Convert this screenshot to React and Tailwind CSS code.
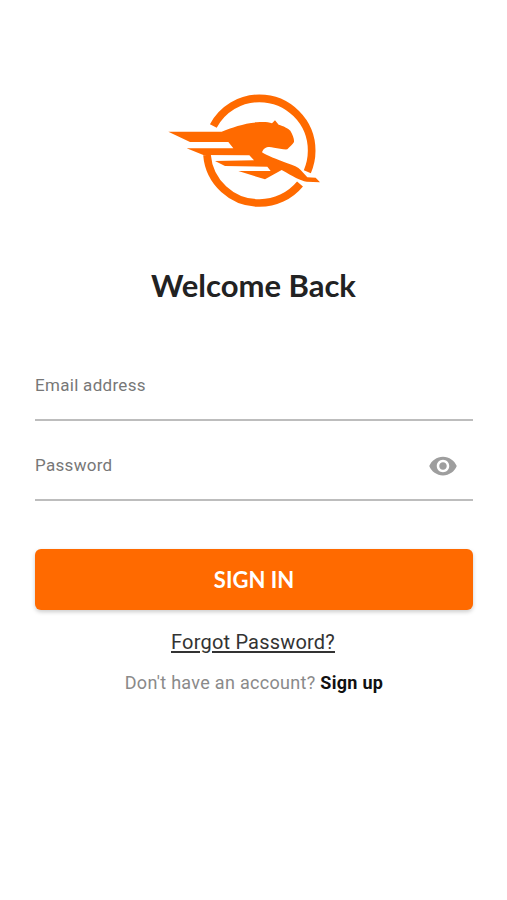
import React from 'react';

function Logo() {
    return (
        <svg width="190" height="140" viewBox="0 0 570 420" className="ml-[150px] block">
            <g fill="none" stroke="#ff6a00" strokeWidth="23">
                <path d="M190 138 A157 157 0 0 1 328 55 A157 157 0 0 1 485 212 A157 157 0 0 1 472 275" />
                <path d="M450 312 A157 157 0 0 1 328 369 A157 157 0 0 1 171 225" />
            </g>
            <path
                fill="#ff6a00"
                d="M55 155 L215 155 C245 143 280 130 320 127 C340 125 355 126 366 130 L375 121 L386 134 C400 138 415 145 421 152 C428 165 433 175 432 186 C428 194 420 198 412 208 C400 209 385 204 372 203 C355 199 342 200 336 217 C350 226 380 238 412 250 C430 256 445 262 452 270 L472 292 L497 293 L510 307 L470 305 C450 302 430 290 395 270 L345 298 L265 273 L362 273 L352 260 L225 258 L195 243 L312 241 L298 226 L160 225 L110 205 L250 205 L235 186 L120 186 Z"
            />
        </svg>
    );
}

function EyeIcon() {
    return (
        <svg width="30" height="30" viewBox="0 0 24 24" fill="#9e9e9e">
            <path d="M12 4.5C7 4.5 2.73 7.61 1 12c1.73 4.39 6 7.5 11 7.5s9.27-3.11 11-7.5c-1.73-4.39-6-7.5-11-7.5zM12 17c-2.76 0-5-2.24-5-5s2.24-5 5-5 5 2.24 5 5-2.24 5-5 5zm0-8c-1.66 0-3 1.34-3 3s1.34 3 3 3 3-1.34 3-3-1.34-3-3-3z" />
        </svg>
    );
}

export default function App() {
    return (
        <div className="w-[507px] h-[900px] bg-white overflow-hidden pt-[80px] font-['Roboto',sans-serif]">
            <Logo />
            <h1 className="mt-[45px] text-center text-[31px] leading-[40px] font-bold text-[#222222] font-['Lato',sans-serif]">
                Welcome Back
            </h1>

            <div className="mt-[57px] mx-[35px] w-[438px]">
                <div className="h-[46px] pt-[11px] border-b-2 border-[#bdbdbd] text-[17px] leading-[24px] tracking-[0.3px] text-[#777777] box-content">
                    Email address
                </div>
                <div className="mt-[22px] h-[56px] border-b-2 border-[#bdbdbd] flex items-center justify-between text-[17px] tracking-[0.3px] text-[#777777] box-content">
                    <span className="-mt-[10px]">Password</span>
                    <span className="mr-[15px] -mt-[10px]"><EyeIcon /></span>
                </div>

                <button className="mt-[48px] w-full h-[61px] rounded-[6px] bg-[#ff6a00] shadow-[0_2px_4px_rgba(0,0,0,0.2)] text-white text-[22px] font-bold font-['Lato',sans-serif]">
                    SIGN IN
                </button>

                <p className="mt-[19px] pr-[2px] text-center text-[20px] leading-[26px] tracking-[0.2px] text-[#333333] underline underline-offset-2">
                    Forgot Password?
                </p>
                <p className="mt-[17px] text-center text-[18px] leading-[22px] tracking-[0.3px] text-[#8a8a8a]">
                    Don't have an account? <span className="font-bold text-[#111111]">Sign up</span>
                </p>
            </div>
        </div>
    );
}
